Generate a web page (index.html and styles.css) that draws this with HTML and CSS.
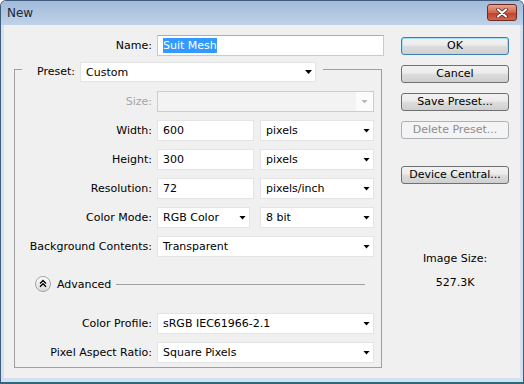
FILE: index.html
```html
<!DOCTYPE html>
<html lang="en">
<head>
    <meta charset="UTF-8">
    <title>New</title>
    <link rel="stylesheet" href="styles.css">
</head>
<body>
    <div class="window">
        <div class="titlebar">
            <span class="title">New</span>
            <button class="close" title="Close">
                <svg width="14" height="10" viewBox="0 0 14 10">
                    <path d="M3 1.5l8 7M11 1.5l-8 7" stroke="#5a2018" stroke-width="3.6" stroke-linecap="round"/>
                    <path d="M3 1.5l8 7M11 1.5l-8 7" stroke="#fff" stroke-width="2.2" stroke-linecap="round"/>
                </svg>
            </button>
        </div>

        <div class="client">
            <div class="form">
                <div class="row name-row">
                    <label class="lbl">Name:</label>
                    <div class="field name-field"><span class="sel">Suit Mesh</span></div>
                </div>

                <div class="group">
                    <div class="group-head">
                        <span class="edge edge-left"></span>
                        <label class="lbl preset-lbl">Preset:</label>
                        <div class="field drop preset-drop">Custom<i class="arrow"></i></div>
                        <span class="edge edge-right"></span>
                    </div>

                    <div class="group-body">
                        <div class="rows">
                            <div class="row">
                                <label class="lbl off">Size:</label>
                                <div class="field drop wide disabled"><span></span><span class="arrow-box"><i class="arrow"></i></span></div>
                            </div>
                            <div class="row">
                                <label class="lbl">Width:</label>
                                <div class="field num">600</div>
                                <div class="field drop unit">pixels<i class="arrow"></i></div>
                            </div>
                            <div class="row">
                                <label class="lbl">Height:</label>
                                <div class="field num">300</div>
                                <div class="field drop unit">pixels<i class="arrow"></i></div>
                            </div>
                            <div class="row">
                                <label class="lbl">Resolution:</label>
                                <div class="field num">72</div>
                                <div class="field drop unit">pixels/inch<i class="arrow"></i></div>
                            </div>
                            <div class="row">
                                <label class="lbl">Color Mode:</label>
                                <div class="field drop mode">RGB Color<i class="arrow"></i></div>
                                <div class="field drop depth">8 bit<i class="arrow"></i></div>
                            </div>
                            <div class="row">
                                <label class="lbl">Background Contents:</label>
                                <div class="field drop wide">Transparent<i class="arrow"></i></div>
                            </div>
                        </div>

                        <div class="advanced">
                            <svg class="toggle" width="16" height="16" viewBox="0 0 16 16">
                                <defs>
                                    <linearGradient id="tg" x1="0" y1="0" x2="0" y2="1">
                                        <stop offset="0" stop-color="#ffffff"/>
                                        <stop offset="1" stop-color="#dadada"/>
                                    </linearGradient>
                                </defs>
                                <circle cx="8" cy="8" r="7.5" fill="url(#tg)" stroke="#a4a4a4"/>
                                <path d="M5 7.5l3-3 3 3M5 10.8l3-3 3 3" fill="none" stroke="#000" stroke-width="1.4"/>
                            </svg>
                            <span class="adv-text">Advanced</span>
                            <span class="adv-line"></span>
                        </div>

                        <div class="rows rows-adv">
                            <div class="row">
                                <label class="lbl">Color Profile:</label>
                                <div class="field drop wide">sRGB IEC61966-2.1<i class="arrow"></i></div>
                            </div>
                            <div class="row">
                                <label class="lbl">Pixel Aspect Ratio:</label>
                                <div class="field drop wide">Square Pixels<i class="arrow"></i></div>
                            </div>
                        </div>
                    </div>
                </div>
            </div>

            <div class="side">
                <button class="btn default">OK</button>
                <button class="btn">Cancel</button>
                <button class="btn">Save Preset...</button>
                <button class="btn" disabled>Delete Preset...</button>
                <button class="btn device">Device Central...</button>
                <div class="info">Image Size:</div>
                <div class="info info-val">527.3K</div>
            </div>
        </div>
    </div>
</body>
</html>
```

FILE: styles.css
```css
* { box-sizing: border-box; }
body { margin: 0; font-family: "DejaVu Sans", Tahoma, sans-serif; font-size: 11px; color: #000; background: #fff; }

.window { width: 524px; height: 384px; display: flex; flex-direction: column; background: #d3e1f0; border: 1px solid #3f5c7c; border-bottom: 2px solid #2d6a7c; border-radius: 6px 6px 0 0; overflow: hidden; }
.titlebar { flex: none; height: 24px; display: flex; justify-content: space-between; align-items: center; padding: 0 6px; background: linear-gradient(#a1bad8, #bfd2e9); }
.title { font-size: 12px; color: #1c2833; }
.close { align-self: flex-start; margin-top: 3px; width: 30px; height: 17px; padding: 0; display: flex; align-items: center; justify-content: center; border: 1px solid #6e2a1f; border-radius: 3px; background: linear-gradient(#e8a593, #d4644d 50%, #bd3f29 51%, #d26650); }

.client { flex: 1; margin: 0 3px 4px; background: #f0f0f0; display: flex; }
.form { width: 382px; flex: none; padding-top: 10px; }

.row { display: flex; }
.lbl { flex: none; text-align: right; line-height: 21px; margin-right: 5px; }
.lbl.off { color: #a6a6a6; }
.name-row .lbl { width: 148px; }

.field { height: 21px; background: #fff; border: 1px solid #e4e4e4; padding: 0 5px; display: flex; align-items: center; white-space: nowrap; }
.name-field { width: 227px; border-color: #b4cfea; border-top-color: #8fb3d9; }
.sel { background: #3399ff; color: #fff; line-height: 15px; }
.drop { justify-content: space-between; padding-right: 3px; }
.arrow { width: 7px; height: 4px; background: #000; clip-path: polygon(0 0, 100% 0, 50% 100%); }
.disabled { background: #f3f3f3; border-color: #cdcdcd; padding-right: 0; }
.arrow-box { width: 17px; height: 100%; background: #fbfbfb; display: flex; align-items: center; justify-content: center; }
.arrow-box .arrow { background: #b8b8b8; }

.group { margin: 6px 4px 0 10px; }
.group-head { display: flex; height: 20px; }
.edge { margin-top: 7px; border-top: 1px solid #a0a0a0; }
.edge-left { width: 8px; border-left: 1px solid #a0a0a0; }
.edge-right { flex: 1; margin-left: 7px; border-right: 1px solid #a0a0a0; }
.preset-lbl { width: 53px; line-height: 20px; }
.preset-drop { width: 236px; height: 20px; }

.group-body { border: 1px solid #a0a0a0; border-top: none; padding: 9px 0 4px; }
.group-body .lbl { width: 137px; }
.rows { display: flex; flex-direction: column; gap: 8px; }
.rows-adv { margin-top: 21px; }
.wide { width: 217px; }
.num { width: 97px; }
.unit { width: 114px; margin-left: 6px; }
.mode { width: 93px; }
.depth { width: 114px; margin-left: 10px; }

.advanced { display: flex; align-items: center; height: 16px; margin-top: 19px; padding-left: 20px; }
.toggle { flex: none; }
.adv-text { margin-left: 6px; }
.adv-line { flex: 1; margin: 0 16px 0 5px; border-top: 1px solid #a0a0a0; }

.side { flex: 1; padding: 12px 0 0 15px; display: flex; flex-direction: column; align-items: flex-start; }
.btn { width: 108px; height: 18px; margin-bottom: 10px; padding: 0; font: inherit; color: #000; line-height: 16px; border: 1px solid #707070; border-radius: 3px; background: linear-gradient(#f2f2f2, #ebebeb 45%, #dddddd 50%, #cfcfcf); }
.btn.default { border-color: #3c7fb1; box-shadow: inset 0 0 0 1px #a6dcf7; }
.btn:disabled { color: #8d8d8d; border-color: #adb2b5; background: #f4f4f4; }
.btn.device { margin-top: 17px; }
.info { width: 108px; text-align: center; line-height: 14px; margin-top: 58px; }
.info-val { margin-top: 10px; }
```
